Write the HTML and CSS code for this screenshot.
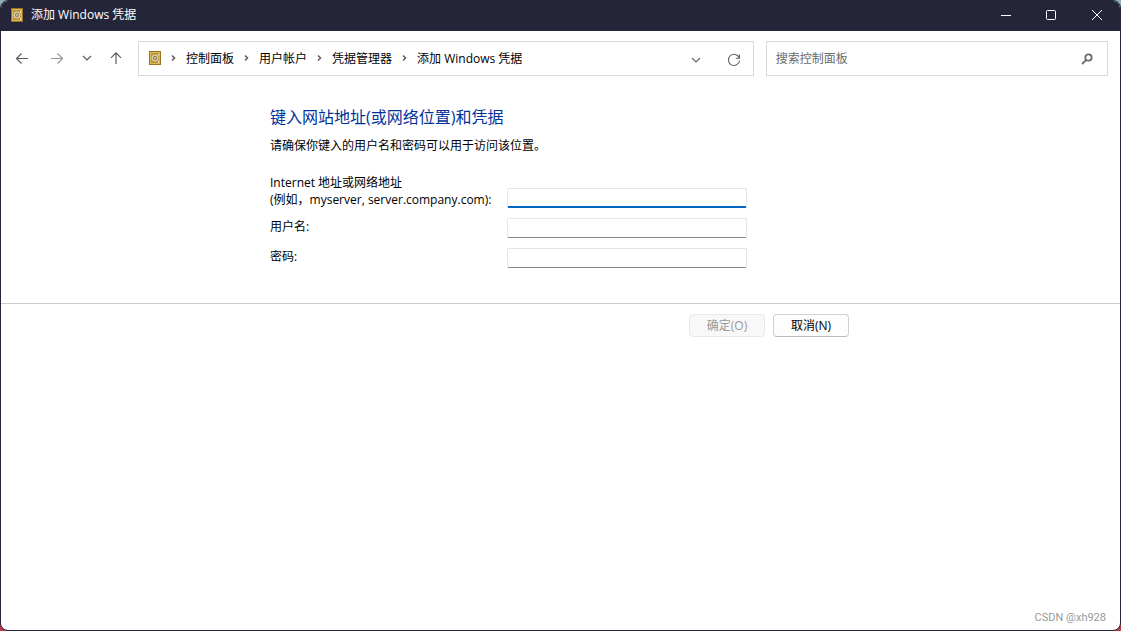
FILE: index.html
```html
<!DOCTYPE html>
<html lang="zh-CN">
<head>
<meta charset="utf-8">
<title>添加 Windows 凭据</title>
<link rel="stylesheet" href="styles.css">
</head>
<body>
<svg class="defs" aria-hidden="true">
  <symbol id="vault" viewBox="0 0 12 14">
    <rect x="0.5" y="0.5" width="11" height="13" fill="#d9b44a" stroke="#9a7420"/>
    <rect x="1.5" y="1.5" width="9" height="11" fill="#bd943a" stroke="#dcb95c"/>
    <circle cx="6" cy="7" r="3" fill="#a89a70" stroke="#e6dcb4"/>
    <circle cx="6" cy="7" r="1.3" fill="#f1efe6" stroke="#7b6a3c" stroke-width="0.7"/>
    <path d="M9.500 3v1.500M9.500 10v1.500" stroke="#fff6d0"/>
  </symbol>
  <symbol id="sep" viewBox="0 0 5 8"><path d="M1 1.500L3.500 4L1 6.500" fill="none" stroke="#5c5c5c" stroke-width="1.5"/></symbol>
</svg>
<div class="window">
  <header class="titlebar">
    <svg class="vault"><use href="#vault"/></svg>
    <h1 class="title">添加 Windows 凭据</h1>
    <div class="controls">
      <button class="control" type="button" aria-label="最小化"><svg viewBox="0 0 12 12"><path d="M1 6.5h10"/></svg></button>
      <button class="control" type="button" aria-label="最大化"><svg viewBox="0 0 12 12"><rect x="1.5" y="1.5" width="9" height="9" rx="1"/></svg></button>
      <button class="control" type="button" aria-label="关闭"><svg viewBox="0 0 12 12"><path d="M1 1l10 10M11 1L1 11"/></svg></button>
    </div>
  </header>
  <div class="toolbar">
    <div class="nav">
      <button class="nav-btn" type="button" aria-label="后退"><svg viewBox="0 0 14 14"><path d="M13 6.500H1.500M6.500 1.500l-5 5 5 5"/></svg></button>
      <button class="nav-btn nav-btn-off" type="button" aria-label="前进"><svg viewBox="0 0 14 14"><path d="M1 6.500h11.500M7.500 1.500l5 5-5 5"/></svg></button>
      <button class="nav-btn nav-btn-small" type="button" aria-label="最近的位置"><svg viewBox="0 0 14 14"><path d="M3 4l4 4 4-4"/></svg></button>
      <button class="nav-btn" type="button" aria-label="向上"><svg viewBox="0 0 14 14"><path d="M7 12V.8M2 5.800l5-5 5 5"/></svg></button>
    </div>
    <div class="address">
      <svg class="vault"><use href="#vault"/></svg>
      <nav class="crumbs" aria-label="地址">
        <svg class="sep"><use href="#sep"/></svg><a class="crumb" href="#">控制面板</a>
        <svg class="sep"><use href="#sep"/></svg><a class="crumb" href="#">用户帐户</a>
        <svg class="sep"><use href="#sep"/></svg><a class="crumb" href="#">凭据管理器</a>
        <svg class="sep"><use href="#sep"/></svg><a class="crumb" href="#">添加 Windows 凭据</a>
      </nav>
      <button class="addr-btn" type="button" aria-label="展开"><svg viewBox="0 0 14 14"><path d="M3 5l4 4 4-4"/></svg></button>
      <button class="addr-btn" type="button" aria-label="刷新"><svg viewBox="0 0 14 14"><path d="M12.300 5A5.600 5.600 0 1 0 12.600 7.500M12.500 1.500v3.700H8.800"/></svg></button>
    </div>
    <div class="search">
      <input class="search-input" type="text" placeholder="搜索控制面板" aria-label="搜索控制面板">
      <svg class="search-icon" viewBox="0 0 12 12"><circle cx="7.500" cy="4.500" r="3.200"/><path d="M5.200 6.800L1 11"/></svg>
    </div>
  </div>
  <form class="form">
    <main class="column">
      <h2 class="heading">键入网站地址(或网络位置)和凭据</h2>
      <p class="intro">请确保你键入的用户名和密码可以用于访问该位置。</p>
      <div class="fields">
        <label class="label" for="address">Internet 地址或网络地址<br>(例如，myserver, server.company.com):</label>
        <input class="input input-active" id="address" type="text">
        <label class="label" for="user">用户名:</label>
        <input class="input" id="user" type="text">
        <label class="label" for="password">密码:</label>
        <input class="input" id="password" type="password">
      </div>
    </main>
    <footer class="footer">
      <div class="column actions">
        <button class="button" type="button" disabled>确定(O)</button>
        <button class="button" type="button">取消(N)</button>
      </div>
    </footer>
  </form>
  <p class="watermark">CSDN @xh928</p>
</div>
</body>
</html>
```

FILE: styles.css
```css
* { box-sizing: border-box; }

body {
  margin: 0;
  background: linear-gradient(#8fb0ba 50%, #b83a48 50%);
  color: #000;
  font: 12px/17px "Open Sans", "Noto Sans CJK SC", sans-serif;
}

button, input { font: inherit; }
button { padding: 0; border: 0; background: none; }
h1, h2, p { margin: 0; font-weight: 400; }
svg { display: block; fill: none; }

.defs { position: absolute; width: 0; height: 0; }

.window {
  display: flex;
  flex-direction: column;
  min-height: 100vh;
  border: 1px solid #25253a;
  border-radius: 8px;
  overflow: hidden;
  background: #fff;
}

.titlebar {
  display: flex;
  align-items: center;
  height: 30px;
  padding: 0 0 2px 10px;
  gap: 8px;
  background: #25253a;
  color: #fff;
}
.vault { flex: none; width: 12px; height: 14px; }
.title { flex: 1; font-size: 12px; line-height: 16px; }
.controls { display: flex; }
.control { display: grid; place-items: center; width: 46px; height: 28px; }
.control:first-child { width: 44px; }
.control svg { width: 12px; height: 12px; stroke: #fff; }

.toolbar {
  display: grid;
  grid-template-columns: 111px minmax(0, 9fr) minmax(0, 5fr);
  gap: 12px;
  padding: 10px 12px 0 14px;
}
.nav { display: flex; align-items: center; gap: 19px; }
.nav-btn svg { width: 14px; height: 14px; stroke: #5c5c5c; stroke-width: 1.2; }
.nav-btn { width: 14px; margin-right: 2px; }
.nav-btn-off { opacity: .65; }
.nav-btn-small { margin: 0 -4px 0 -5px; }

.address, .search {
  display: flex;
  align-items: center;
  height: 35px;
  border: 1px solid #d9d9d9;
  background: #fff;
}
.address { padding: 0 12px 0 10px; gap: 10px; }
.address .vault { margin-bottom: 1px; }
.search { padding: 0 14px 0 9px; }
.crumbs { display: flex; flex: 1; align-items: center; gap: 10px; padding-bottom: 1px; }
.crumb { color: inherit; text-decoration: none; white-space: nowrap; }
.sep { flex: none; width: 5px; height: 8px; }
.addr-btn { width: 14px; margin-left: 14px; padding-top: 2px; }
.addr-btn svg { width: 14px; height: 14px; stroke: #666; stroke-width: 1.1; }
.search-input {
  flex: 1;
  min-width: 0;
  padding: 0;
  border: 0;
  outline: 0;
  background: none;
}
.search-input::placeholder { color: #6b6b6b; opacity: 1; }
.search-icon { width: 12px; height: 12px; stroke: #6b6b6b; stroke-width: 1.8; }

.column { width: 100%; max-width: 581px; margin: 0 auto; }
.form { padding-top: 30px; }
.heading { color: #003399; font-size: 16px; line-height: 22px; }
.intro { margin-top: 9px; }
.fields {
  display: grid;
  grid-template-columns: 229px 240px;
  column-gap: 8px;
  row-gap: 10px;
  align-items: end;
  margin-top: 20px;
}
.label { white-space: nowrap; }
.label:not(:first-child) { align-self: start; }
.input {
  width: 100%;
  height: 20px;
  padding: 0 4px;
  border: 1px solid #e5e5e5;
  border-bottom-color: #868686;
  border-radius: 2px;
  outline: 0;
  background: #fff;
}
.input-active { border-bottom: 2px solid #0067c0; }

.footer { margin-top: 35px; padding-top: 10px; border-top: 1px solid #ccc; }
.actions { display: flex; justify-content: flex-end; gap: 8px; padding-right: 2px; }
.button {
  width: 76px;
  height: 23px;
  border: 1px solid #d0d0d0;
  border-bottom-color: #bbb;
  border-radius: 4px;
  background: #fdfdfd;
  color: #000;
}
.button:disabled { border-color: #e8e8e8; background: #f8f8f8; color: #999; }

.watermark {
  margin-top: auto;
  padding: 0 14px 4px;
  text-align: right;
  color: #999;
  font: 11px/17px Roboto, sans-serif;
}
```
